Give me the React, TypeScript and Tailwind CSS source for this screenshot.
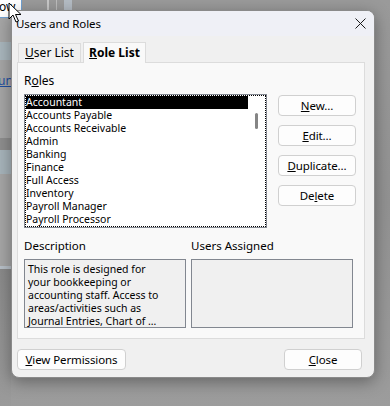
const roles = [
  'Accountant',
  'Accounts Payable',
  'Accounts Receivable',
  'Admin',
  'Banking',
  'Finance',
  'Full Access',
  'Inventory',
  'Payroll Manager',
  'Payroll Processor',
]

function Btn({ children, className = '' }: { children: React.ReactNode; className?: string }) {
  return (
    <div
      className={`h-[21px] flex items-center justify-center rounded-[4px] border border-[#d0d0d0] bg-[#fdfdfd] text-[11.5px] tracking-[-0.1px] text-black ${className}`}
    >
      {children}
    </div>
  )
}

function Backdrop() {
  return (
    <div className="absolute inset-0 bg-gradient-to-b from-[#9a9a9a] via-[#929292] to-[#9c9c9c]">
      {/* app window behind the dialog, dimmed */}
      <div className="absolute left-0 top-0 w-[22px] h-[18px] bg-white border-r border-b border-[#6f9fd0] text-[12px] text-black leading-[14px] overflow-hidden">
        <span className="relative left-[-1px]">ow</span>
      </div>
      <div className="absolute left-[47px] top-0 w-[2px] h-[10px] bg-[#c8c8c8]" />
      <div className="absolute left-[56px] top-0 w-[1px] h-[10px] bg-[#bdbdbd]" />
      <div className="absolute left-[64px] top-0 w-[8px] h-[10px] bg-[#b4bcc4]" />
      <div className="absolute left-0 top-[18px] w-[11px] h-[250px] bg-[#a6a6a6]" />
      <div className="absolute left-0 top-[42px] w-[11px] h-[18px] bg-[#a9b6bd]" />
      <div className="absolute left-0 top-[74px] w-[11px] text-[12px] leading-[14px] text-[#1f4fa0] underline overflow-hidden">
        <span className="relative left-[-2px]">un</span>
      </div>
      <div className="absolute left-0 top-[138px] w-[11px] h-[12px] bg-[#8e8e8e]" />
      <div className="absolute left-0 top-[150px] w-[11px] h-[24px] bg-[#a7b4bb]" />
      <div className="absolute left-0 top-[266px] w-[11px] h-[3px] bg-[#b8c0c8]" />
      <div className="absolute left-0 top-[269px] w-[11px] h-[137px] bg-gradient-to-b from-[#8a8a8a] to-[#9a9a9a]" />
    </div>
  )
}

function Cursor() {
  return (
    <svg className="absolute left-[8px] top-[2px]" width="14" height="22" viewBox="0 0 14 22">
      <path
        d="M1 1 L1 17 L5 13 L8 20 L10.5 19 L7.5 12.5 L13 12.5 Z"
        fill="#fff"
        stroke="#000"
        strokeWidth="1"
        strokeLinejoin="round"
      />
    </svg>
  )
}

export default function App() {
  return (
    <div
      className="relative w-[390px] h-[406px] overflow-hidden"
      style={{ fontFamily: '"Noto Sans", "Liberation Sans", sans-serif' }}
    >
      <Backdrop />

      <div className="relative ml-[11px] mt-[10px] w-[364px] h-[368px] rounded-[8px] bg-[#f0f0f0] border border-[#8a8a8a] shadow-[0_4px_16px_rgba(0,0,0,0.35)] overflow-hidden flex flex-col">
        {/* title bar */}
        <div className="h-[25px] shrink-0 bg-[#eff0f6] flex items-center justify-between pl-[4px] pr-[8px]">
          <span className="text-[11.5px] tracking-[-0.1px] text-black">Users and Roles</span>
          <svg width="11" height="11" viewBox="0 0 11 11">
            <path d="M0.5 0.5 L10.5 10.5 M10.5 0.5 L0.5 10.5" stroke="#1a1a1a" strokeWidth="1" />
          </svg>
        </div>

        {/* tabs */}
        <div className="flex items-end ml-[6px] mt-[6px] h-[20px] relative z-10">
          <div className="h-[19px] w-[63px] flex items-center justify-center border border-b-0 border-[#dcdcdc] bg-[#f0f0f0] text-[12px] text-black">
            <span><span className="underline">U</span>ser List</span>
          </div>
          <div className="h-[21px] w-[63px] ml-[2px] mb-[-1px] flex items-center justify-center border border-b-0 border-[#dcdcdc] bg-[#f9f9f9] text-[12px] font-bold text-black">
            <span><span className="underline">R</span>ole List</span>
          </div>
        </div>

        {/* tab panel */}
        <div className="ml-[5px] w-[348px] h-[277px] border border-[#dcdcdc] bg-[#f9f9f9] px-[6px] pt-[10px] flex flex-col">
          <div className="text-[12px] leading-[16px] text-black">
            R<span className="underline">o</span>les
          </div>
          <div className="flex mt-[5px]">
            <div className="w-[243px] h-[134px] border border-[#828790] bg-white p-0">
              <div className="h-full border border-dotted border-black flex">
                <div className="flex-1 flex flex-col">
                  {roles.map((r, i) => (
                    <div
                      key={r}
                      className={`h-[13px] leading-[13px] text-[10.5px] ${i === 0 ? 'bg-black text-white' : 'text-black'}`}
                    >
                      {r}
                    </div>
                  ))}
                </div>
                <div className="w-[17px] relative">
                  <div className="absolute left-[7px] top-[17px] w-[3px] h-[16px] rounded-full bg-[#858585]" />
                </div>
              </div>
            </div>
            <div className="ml-[11px] mt-[1px] flex flex-col gap-[9px] w-[78px]">
              <Btn>
                <span><span className="underline">N</span>ew…</span>
              </Btn>
              <Btn>
                <span><span className="underline">E</span>dit…</span>
              </Btn>
              <Btn>
                <span><span className="underline">D</span>uplicate…</span>
              </Btn>
              <Btn>
                <span>De<span className="underline">l</span>ete</span>
              </Btn>
            </div>
          </div>

          <div className="flex gap-[5px] mt-[10px]">
            <div className="w-[162px]">
              <div className="text-[11.5px] leading-[16px] text-black">Description</div>
              <div className="mt-[5px] h-[69px] border border-[#828790] bg-[#f0f0f0] px-[3px] pt-[3px] text-[10.5px] leading-[13px] text-black whitespace-nowrap overflow-hidden">
                This role is designed for
                <br />
                your bookkeeping or
                <br />
                accounting staff. Access to
                <br />
                areas/activities such as
                <br />
                Journal Entries, Chart of …
              </div>
            </div>
            <div className="w-[162px]">
              <div className="text-[11.5px] leading-[16px] text-black">Users Assigned</div>
              <div className="mt-[5px] h-[69px] border border-[#828790] bg-[#f0f0f0]" />
            </div>
          </div>
        </div>

        {/* footer */}
        <div className="flex justify-between mt-[10px] ml-[5px] mr-[12px]">
          <Btn className="w-[109px]">
            <span><span className="underline">V</span>iew Permissions</span>
          </Btn>
          <Btn className="w-[78px]">
            <span><span className="underline">C</span>lose</span>
          </Btn>
        </div>
      </div>

      <Cursor />
    </div>
  )
}
